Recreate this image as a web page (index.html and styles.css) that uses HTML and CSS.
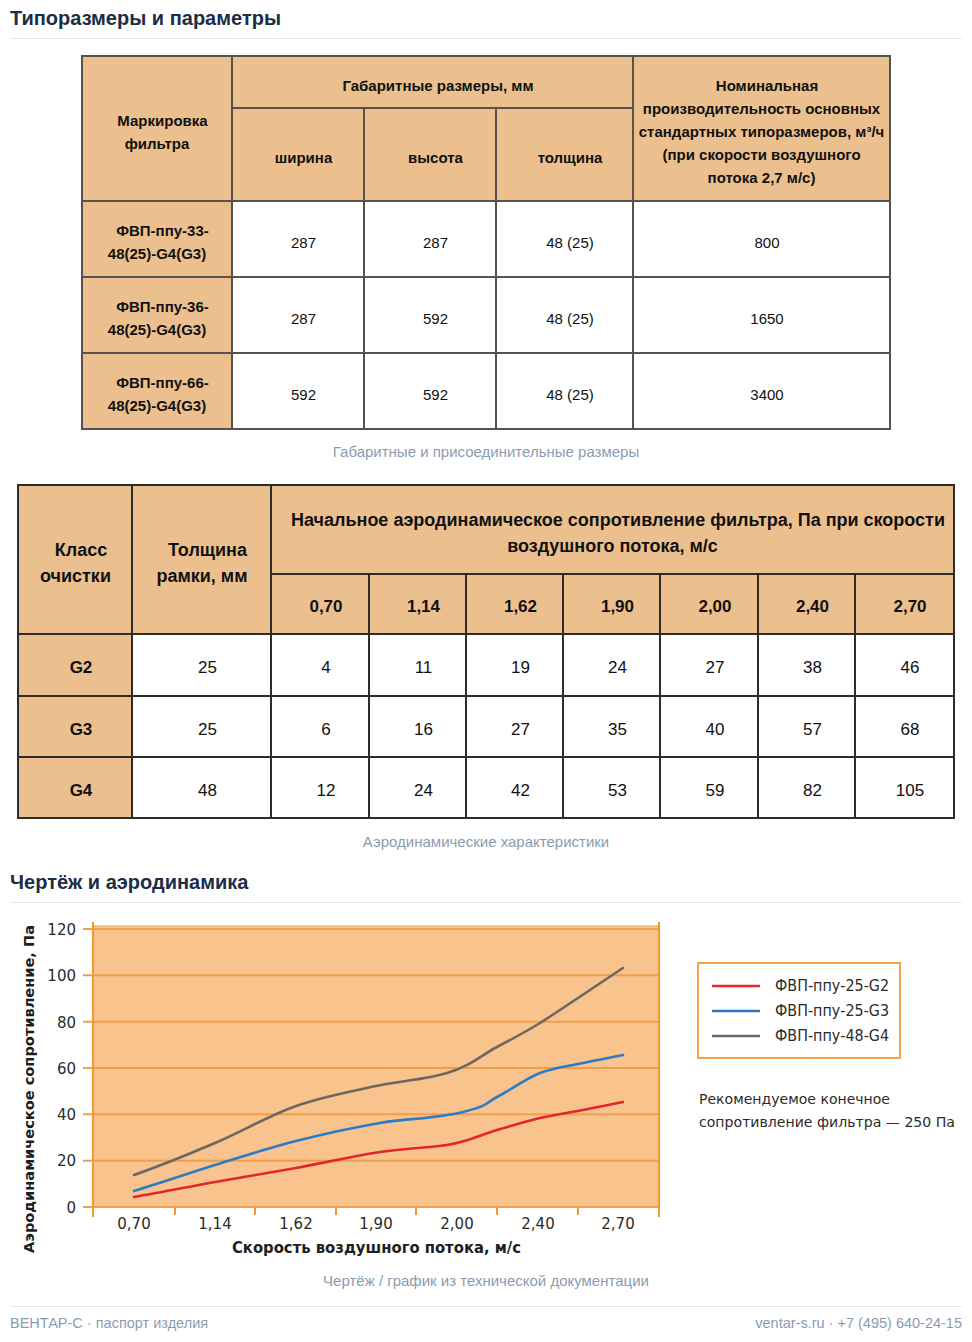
FILE: index.html
```html
<!DOCTYPE html>
<html lang="ru">
<head>
<meta charset="utf-8">
<title>Типоразмеры и параметры</title>
<link rel="stylesheet" href="styles.css">
</head>
<body>
<section class="sec">
  <h2 class="sec-title">Типоразмеры и параметры</h2>
  <figure class="fig fig-t1">
    <table class="tbl t1">
      <colgroup>
        <col class="c150"><col class="c132"><col class="c132"><col class="c137"><col class="c257">
      </colgroup>
      <thead>
        <tr class="h1">
          <th rowspan="2">Маркировка<br>фильтра</th>
          <th colspan="3">Габаритные размеры, мм</th>
          <th rowspan="2">Номинальная<br>производительность основных<br>стандартных типоразмеров, м³/ч<br>(при скорости воздушного<br>потока 2,7 м/с)</th>
        </tr>
        <tr class="h2">
          <th>ширина</th><th>высота</th><th>толщина</th>
        </tr>
      </thead>
      <tbody>
        <tr><th>ФВП-ппу-33-<br>48(25)-G4(G3)</th><td>287</td><td>287</td><td>48 (25)</td><td>800</td></tr>
        <tr><th>ФВП-ппу-36-<br>48(25)-G4(G3)</th><td>287</td><td>592</td><td>48 (25)</td><td>1650</td></tr>
        <tr><th>ФВП-ппу-66-<br>48(25)-G4(G3)</th><td>592</td><td>592</td><td>48 (25)</td><td>3400</td></tr>
      </tbody>
    </table>
    <figcaption class="cap cap-t1">Габаритные и присоединительные размеры</figcaption>
  </figure>

  <figure class="fig fig-t2">
    <table class="tbl t2">
      <colgroup>
        <col class="d114"><col class="d139"><col class="d98"><col class="d97"><col class="d97"><col class="d97"><col class="d98"><col class="d97"><col class="d98">
      </colgroup>
      <thead>
        <tr class="h1">
          <th rowspan="2" class="big">Класс<br>очистки</th>
          <th rowspan="2" class="big">Толщина<br>рамки, мм</th>
          <th colspan="7" class="big">Начальное аэродинамическое сопротивление фильтра, Па при скорости<br>воздушного потока, м/с</th>
        </tr>
        <tr class="h2">
          <th>0,70</th><th>1,14</th><th>1,62</th><th>1,90</th><th>2,00</th><th>2,40</th><th>2,70</th>
        </tr>
      </thead>
      <tbody>
        <tr class="r62"><th>G2</th><td>25</td><td>4</td><td>11</td><td>19</td><td>24</td><td>27</td><td>38</td><td>46</td></tr>
        <tr class="r61"><th>G3</th><td>25</td><td>6</td><td>16</td><td>27</td><td>35</td><td>40</td><td>57</td><td>68</td></tr>
        <tr class="r61"><th>G4</th><td>48</td><td>12</td><td>24</td><td>42</td><td>53</td><td>59</td><td>82</td><td>105</td></tr>
      </tbody>
    </table>
    <figcaption class="cap">Аэродинамические характеристики</figcaption>
  </figure>
</section>

<section class="sec">
  <h2 class="sec-title sec-title-2">Чертёж и аэродинамика</h2>
  <figure class="fig fig-chart">
    <svg class="chart" width="952" height="350" viewBox="10 912 952 350" xmlns="http://www.w3.org/2000/svg">
      <rect x="93" y="925" width="566" height="282" fill="#f9c38e"/>
      <g stroke="#eea04c" stroke-width="2">
        <line x1="83" y1="929" x2="659" y2="929"/>
        <line x1="83" y1="975.3" x2="659" y2="975.3"/>
        <line x1="83" y1="1021.7" x2="659" y2="1021.7"/>
        <line x1="83" y1="1068" x2="659" y2="1068"/>
        <line x1="83" y1="1114.3" x2="659" y2="1114.3"/>
        <line x1="83" y1="1160.7" x2="659" y2="1160.7"/>
        <line x1="83" y1="1207" x2="659" y2="1207"/>
      </g>
      <g stroke="#f29a30" stroke-width="2">
        <line x1="93" y1="922" x2="93" y2="1217"/>
        <line x1="659" y1="922" x2="659" y2="1217"/>
        <line x1="175" y1="1207" x2="175" y2="1215"/>
        <line x1="255" y1="1207" x2="255" y2="1215"/>
        <line x1="336" y1="1207" x2="336" y2="1215"/>
        <line x1="416" y1="1207" x2="416" y2="1215"/>
        <line x1="497" y1="1207" x2="497" y2="1215"/>
        <line x1="578" y1="1207" x2="578" y2="1215"/>
      </g>
      <g fill="none" stroke-width="2.6" stroke-linecap="round" stroke-linejoin="round">
        <path stroke="#6d6661" d="M134,1175 C161,1165.5 188,1154.5 215,1143 S269,1115.6 296,1106 S349.3,1091.8 376,1086 S423.3,1080.1 447,1073 S480.3,1056 497,1047 S525.7,1032 540,1023 S595.3,986.3 623,968"/>
        <path stroke="#2c7cc3" d="M134,1191 C161,1182.9 188,1173.4 215,1165 S269,1147.8 296,1141 S352,1127.8 380,1123 S435.3,1118.9 463,1112 S485.7,1102.7 497,1097 S525.7,1078.7 540,1073 S568.7,1066.1 583,1063 S609.7,1057.7 623,1055"/>
        <path stroke="#e3262b" d="M134,1197 C161,1192.4 188,1186.9 215,1182 S269,1172.9 296,1168 S352,1156.2 380,1152 S424.7,1148.3 447,1145 S480.3,1134.8 497,1130 S525.7,1121.3 540,1118 S568.7,1112.7 583,1110 S609.7,1104.7 623,1102"/>
      </g>
      <g class="ax" text-anchor="end">
        <text x="76" y="935">120</text>
        <text x="76" y="981">100</text>
        <text x="76" y="1028">80</text>
        <text x="76" y="1074">60</text>
        <text x="76" y="1120">40</text>
        <text x="76" y="1166">20</text>
        <text x="76" y="1213">0</text>
      </g>
      <g class="ax" text-anchor="middle">
        <text x="134" y="1229">0,70</text>
        <text x="215" y="1229">1,14</text>
        <text x="296" y="1229">1,62</text>
        <text x="376" y="1229">1,90</text>
        <text x="457" y="1229">2,00</text>
        <text x="538" y="1229">2,40</text>
        <text x="618" y="1229">2,70</text>
      </g>
      <text class="ax-title" x="232" y="1253" textLength="289" lengthAdjust="spacingAndGlyphs">Скорость воздушного потока, м/с</text>
      <text class="ax-title ax-title-v" transform="translate(34,1253) rotate(-90)" x="0" y="0" textLength="328" lengthAdjust="spacingAndGlyphs">Аэродинамическое сопротивление, Па</text>
      <rect x="698" y="963" width="202" height="95" fill="#fff" stroke="#f4a446" stroke-width="2"/>
      <g stroke-width="2.6">
        <line x1="712" y1="986" x2="760" y2="986" stroke="#e3262b"/>
        <line x1="712" y1="1011" x2="760" y2="1011" stroke="#2c7cc3"/>
        <line x1="712" y1="1036" x2="760" y2="1036" stroke="#6d6661"/>
      </g>
      <g class="lg">
        <text x="775" y="991" textLength="114" lengthAdjust="spacingAndGlyphs">ФВП-ппу-25-G2</text>
        <text x="775" y="1016" textLength="114" lengthAdjust="spacingAndGlyphs">ФВП-ппу-25-G3</text>
        <text x="775" y="1041" textLength="114" lengthAdjust="spacingAndGlyphs">ФВП-ппу-48-G4</text>
      </g>
      <g class="lg lg-note">
        <text x="699" y="1104" textLength="191" lengthAdjust="spacingAndGlyphs">Рекомендуемое конечное</text>
        <text x="699" y="1127" textLength="256" lengthAdjust="spacingAndGlyphs">сопротивление фильтра — 250 Па</text>
      </g>
    </svg>
    <figcaption class="cap cap-chart">Чертёж / график из технической документации</figcaption>
  </figure>
</section>

<footer class="foot">
  <span>ВЕНТАР-С · паспорт изделия</span>
  <span>ventar-s.ru · +7 (495) 640-24-15</span>
</footer>
</body>
</html>
```

FILE: styles.css
```css
html, body {
  margin: 0;
  padding: 0;
  background: #ffffff;
}

body {
  padding: 0 10px;
  font-family: "Liberation Sans", Arial, sans-serif;
  color: #111111;
}

.sec-title {
  margin: 0;
  padding: 7px 0 9px;
  font-size: 20px;
  line-height: 22px;
  font-weight: bold;
  color: #1b2d47;
  border-bottom: 1px solid #dce8f3;
}

.sec-title-2 {
  margin-top: 12px;
}

.fig {
  margin: 0;
  display: flex;
  flex-direction: column;
  align-items: center;
}

.fig-t1 {
  margin-top: 16px;
}

.fig-t2 {
  margin-top: 22px;
}

.fig-chart {
  margin-top: 9px;
  align-items: stretch;
}

.cap {
  margin-top: 13px;
  font-size: 15px;
  line-height: 20px;
  color: #8b9cb0;
  text-align: center;
}

.cap-t1 {
  margin-top: 12px;
}

.cap-chart {
  margin-top: 9px;
}

.tbl {
  border-collapse: collapse;
  table-layout: fixed;
  background: #ffffff;
}

.tbl th,
.tbl td {
  padding: 6px 0 0;
  text-align: center;
  vertical-align: middle;
  text-indent: 11px;
  white-space: nowrap;
}

.tbl th {
  background: #ebc08e;
  font-weight: bold;
}

.tbl td {
  background: #ffffff;
  font-weight: normal;
}

/* table 1 */
.t1 {
  width: 808px;
  font-size: 15px;
  line-height: 23px;
}

.t1 th,
.t1 td {
  border: 2px solid #57524d;
}

.t1 .h1 { height: 52px; }
.t1 .h2 { height: 93px; }
.t1 tbody tr { height: 76px; }

.c150 { width: 150px; }
.c132 { width: 132px; }
.c137 { width: 137px; }
.c257 { width: 257px; }

/* table 2 */
.t2 {
  width: 935px;
  font-size: 17px;
  line-height: 26px;
}

.t2 th,
.t2 td {
  border: 2px solid #2e2c2a;
}

.t2 th.big {
  font-size: 18px;
  padding-top: 7px;
}

.t2 .h1 { height: 89px; }
.t2 .h2 { height: 60px; }
.t2 .r62 { height: 62px; }
.t2 .r61 { height: 61px; }

.d114 { width: 114px; }
.d139 { width: 139px; }
.d98 { width: 98px; }
.d97 { width: 97px; }

/* chart */
.chart {
  display: block;
  width: 952px;
  height: 350px;
}

.ax {
  font-family: "DejaVu Sans", Verdana, sans-serif;
  font-size: 15px;
  fill: #2b2b2b;
}

.ax-title {
  font-family: "DejaVu Sans", Verdana, sans-serif;
  font-size: 16px;
  font-weight: bold;
  fill: #1e1e1e;
}

.ax-title-v {
  font-size: 14.5px;
}

.lg {
  font-family: "DejaVu Sans", Verdana, sans-serif;
  font-size: 15px;
  fill: #2b2b2b;
}

.lg-note {
  font-size: 14px;
}

/* footer */
.foot {
  margin-top: 15px;
  padding-top: 7px;
  border-top: 1px solid #dce8f3;
  display: flex;
  justify-content: space-between;
  font-size: 14.5px;
  line-height: 18px;
  color: #8b9cb0;
}
```
